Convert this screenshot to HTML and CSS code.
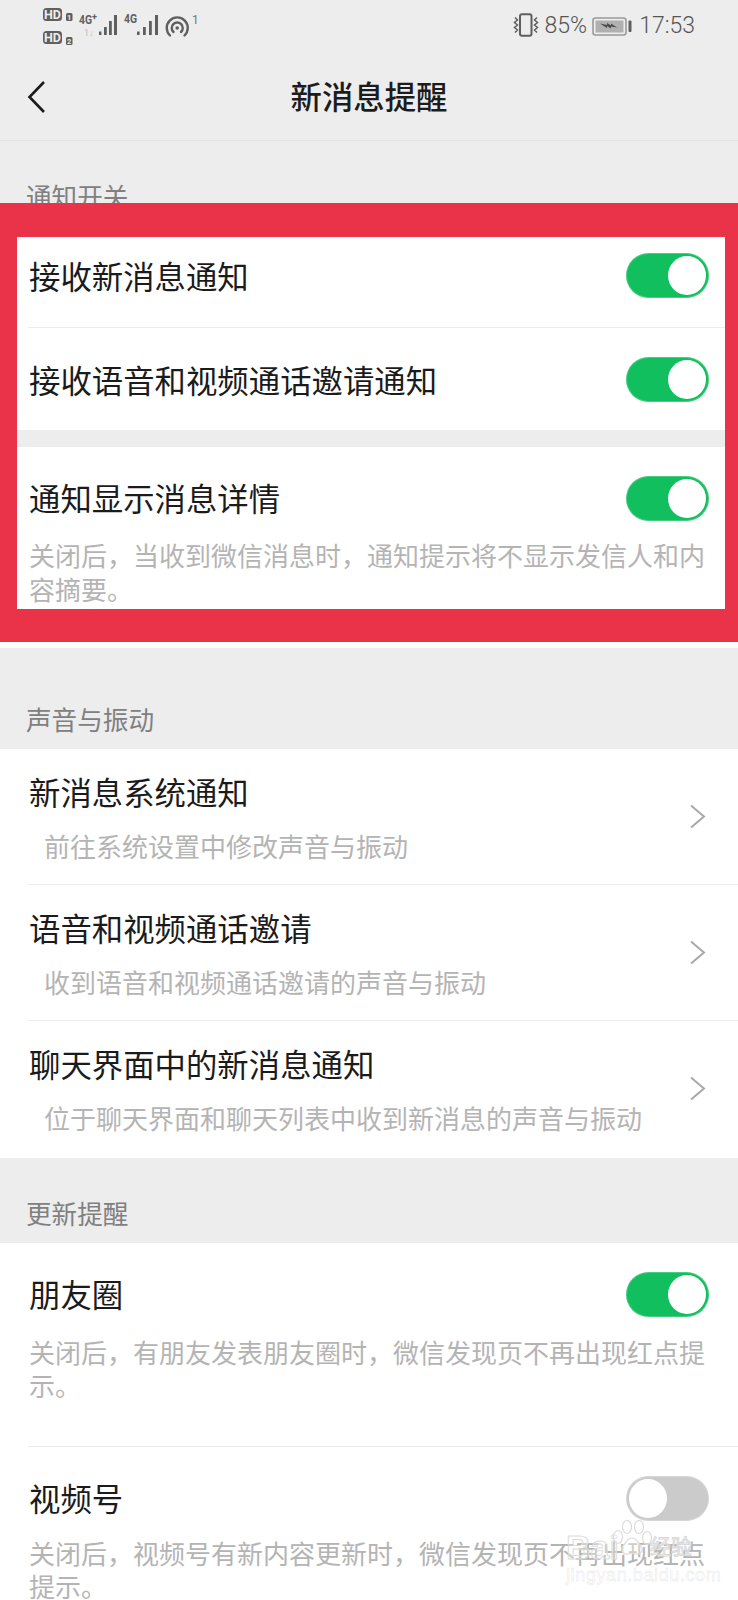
FILE: index.html
```html
<!DOCTYPE html>
<html lang="zh-CN">
<head>
<meta charset="utf-8">
<title>新消息提醒</title>
<link rel="stylesheet" href="styles.css">
</head>
<body>
<div class="page">
  <header class="status">
    <svg class="status-left" width="170" height="50" viewBox="35 0 170 50">
      <rect x="43" y="8" width="19" height="13" rx="3.5" fill="#5f5f5f"/>
      <text x="52.5" y="19" class="hd" text-anchor="middle">HD</text>
      <rect x="66" y="13" width="6.5" height="8" rx="1.5" fill="#5f5f5f"/>
      <text x="69.2" y="20" class="tiny-in" text-anchor="middle">1</text>
      <rect x="43" y="31" width="19" height="13" rx="3.5" fill="#5f5f5f"/>
      <text x="52.5" y="42" class="hd" text-anchor="middle">HD</text>
      <rect x="66" y="37" width="6.5" height="8" rx="1.5" fill="#5f5f5f"/>
      <text x="69.2" y="44" class="tiny-in" text-anchor="middle">2</text>
      <text x="79" y="24" class="net" textLength="13" lengthAdjust="spacingAndGlyphs">4G</text>
      <text x="92" y="20" class="plus">+</text>
      <text x="84" y="36" class="updown">1↓</text>
      <g fill="#5f5f5f">
        <rect x="99" y="31.5" width="2.4" height="3.5"/>
        <rect x="104" y="27" width="2.8" height="8"/>
        <rect x="109" y="21" width="2.8" height="14"/>
        <rect x="114" y="15" width="3" height="20"/>
      </g>
      <text x="124" y="23" class="net" textLength="13" lengthAdjust="spacingAndGlyphs">4G</text>
      <g fill="#5f5f5f">
        <rect x="137" y="31.5" width="2.6" height="3.5"/>
        <rect x="143" y="27" width="2.8" height="8"/>
        <rect x="149" y="21" width="2.8" height="14"/>
        <rect x="155" y="15" width="3" height="20"/>
      </g>
      <g fill="none" stroke="#5f5f5f" stroke-width="2.4" stroke-linecap="round">
        <path d="M170 35.5a10.5 10.5 0 1 1 14.5 0"/>
        <path d="M173.5 32a5.5 5.5 0 1 1 7.5 0"/>
      </g>
      <circle cx="177.2" cy="28" r="1.8" fill="#5f5f5f"/>
      <text x="192" y="24" class="sup">1</text>
    </svg>
    <div class="status-right">
      <svg width="28" height="24" viewBox="0 0 28 24" class="vib">
        <rect x="8" y="1.2" width="11.5" height="21.5" rx="2" fill="none" stroke="#5f5f5f" stroke-width="2"/>
        <path d="M3 4.5l2.5 2.5-3 2.5 3 2.5-3 2.5 3 2.5-2.5 2.5M25 4.5l-2.5 2.5 3 2.5-3 2.5 3 2.5-3 2.5 2.5 2.5" fill="none" stroke="#5f5f5f" stroke-width="1.5"/>
      </svg>
      <span class="pct">85%</span>
      <svg width="40" height="19" viewBox="0 0 40 19" class="batt">
        <rect x="1" y="1" width="33" height="17" rx="2.5" fill="none" stroke="#999" stroke-width="1.6"/>
        <rect x="3.5" y="3.5" width="28" height="12" fill="#b0b0b0"/>
        <rect x="36.5" y="3.5" width="3" height="11.5" rx="1" fill="#5f5f5f"/>
        <path d="M8 6.500l7 1.500 0-2 4 2.500 0-2 6 4-6-1 0 2-4-2.500 0 2z" fill="#4a4a4a"/>
      </svg>
      <span class="time">17:53</span>
    </div>
  </header>

  <nav class="nav">
    <svg class="back" width="20" height="34" viewBox="0 0 20 34"><path d="M17 2L2.500 17 17 32" fill="none" stroke="#1c1c1c" stroke-width="2.600"/></svg>
    <h1 class="nav-title">新消息提醒</h1>
  </nav>

  <h2 class="head head-first">通知开关</h2>
  <section class="card">
    <div class="row row-first line">
      <span class="title">接收新消息通知</span>
      <span class="toggle on"><i class="thumb"></i></span>
    </div>
    <div class="row">
      <span class="title">接收语音和视频通话邀请通知</span>
      <span class="toggle on"><i class="thumb"></i></span>
    </div>
  </section>
  <section class="card card-gap">
    <div class="detail detail-a">
      <div class="detail-top">
        <span class="title">通知显示消息详情</span>
        <span class="toggle on"><i class="thumb"></i></span>
      </div>
      <p class="desc">关闭后，当收到微信消息时，通知提示将不显示发信人和内容摘要。</p>
    </div>
  </section>

  <h2 class="head head-second">声音与振动</h2>
  <section class="card">
    <div class="link line">
      <div class="link-text">
        <div class="title">新消息系统通知</div>
        <div class="sub">前往系统设置中修改声音与振动</div>
      </div>
      <svg class="chev" width="17" height="25" viewBox="0 0 17 25"><path d="M2 1.500L15 12.500 2 23.500" fill="none" stroke="#a8a8a8" stroke-width="2"/></svg>
    </div>
    <div class="link line">
      <div class="link-text">
        <div class="title">语音和视频通话邀请</div>
        <div class="sub">收到语音和视频通话邀请的声音与振动</div>
      </div>
      <svg class="chev" width="17" height="25" viewBox="0 0 17 25"><path d="M2 1.500L15 12.500 2 23.500" fill="none" stroke="#a8a8a8" stroke-width="2"/></svg>
    </div>
    <div class="link">
      <div class="link-text">
        <div class="title">聊天界面中的新消息通知</div>
        <div class="sub">位于聊天界面和聊天列表中收到新消息的声音与振动</div>
      </div>
      <svg class="chev" width="17" height="25" viewBox="0 0 17 25"><path d="M2 1.500L15 12.500 2 23.500" fill="none" stroke="#a8a8a8" stroke-width="2"/></svg>
    </div>
  </section>

  <h2 class="head head-third">更新提醒</h2>
  <section class="card">
    <div class="detail detail-b line">
      <div class="detail-top">
        <span class="title">朋友圈</span>
        <span class="toggle on"><i class="thumb"></i></span>
      </div>
      <p class="desc">关闭后，有朋友发表朋友圈时，微信发现页不再出现红点提示。</p>
    </div>
    <div class="detail detail-c">
      <div class="detail-top">
        <span class="title">视频号</span>
        <span class="toggle"><i class="thumb"></i></span>
      </div>
      <p class="desc">关闭后，视频号有新内容更新时，微信发现页不再出现红点提示。</p>
    </div>
  </section>

  <div class="frame"></div>

  <div class="mark">
    <span class="mark-bai">Bai</span>
    <svg class="paw" width="40" height="36" viewBox="0 0 40 36">
      <g fill="rgba(255,255,255,.35)" stroke="#dcdcdc" stroke-width="1.200">
        <ellipse cx="6" cy="17" rx="4.500" ry="6.500"/>
        <ellipse cx="15" cy="7" rx="4.500" ry="6.500"/>
        <ellipse cx="27" cy="7" rx="4.500" ry="6.500"/>
        <ellipse cx="35" cy="18" rx="4.500" ry="6.500"/>
        <path d="M20 18c-5 0-6 5-9 8-3 4 0 9 5 8 3-1 5-1 8 0 5 1 8-4 5-8-3-3-4-8-9-8z"/>
      </g>
    </svg>
    <span class="mark-cn">经验</span>
    <span class="mark-url">jingyan.baidu.com</span>
  </div>
</div>
</body>
</html>
```

FILE: styles.css
```css
* { box-sizing: border-box; }
html, body { margin: 0; padding: 0; }
body {
  background: #ededed;
  font-family: "Noto Sans CJK SC", "Noto Sans", sans-serif;
  color: #1b1b1b;
}
.page {
  position: relative;
  width: 738px;
  height: 1600px;
  overflow: hidden;
  background: #ededed;
}

/* status bar */
.status {
  height: 60px;
  display: flex;
  justify-content: space-between;
  padding-right: 43px;
}
.status-left { display: block; margin-left: 35px; }
.status-left text { font-family: "Roboto", sans-serif; }
.status-left .hd { font-size: 12.5px; font-weight: 700; fill: #ededed; }
.status-left .tiny-in { font-size: 7.5px; font-weight: 700; fill: #ededed; }
.status-left .net { font-size: 12.5px; font-weight: 700; fill: #5f5f5f; }
.status-left .plus { font-size: 9px; font-weight: 700; fill: #5f5f5f; }
.status-left .updown { font-size: 9px; fill: #c2c2c2; }
.status-left .sup { font-size: 12px; fill: #777; }
.status-right {
  display: flex;
  align-items: center;
  height: 50px;
  font-family: "Roboto", sans-serif;
  font-weight: 300;
  font-size: 23px;
  color: #555;
}
.vib { margin-right: -1px; }
.pct { margin-left: 6px; margin-right: 5px; }
.batt { margin-right: 7px; margin-top: 2px; }

/* nav */
.nav {
  height: 81px;
  display: flex;
  align-items: center;
  justify-content: center;
  position: relative;
  border-bottom: 1px solid #e3e3e3;
}
.back { position: absolute; left: 27px; top: 20px; }
.nav-title {
  margin: 0;
  padding-bottom: 9px;
  font-size: 31.4px;
  font-weight: 500;
  line-height: 44px;
  color: #1c1c1c;
}

/* section headers */
.head {
  margin: 0;
  padding: 0 0 13px 26px;
  font-size: 25.6px;
  font-weight: 400;
  line-height: 34px;
  color: #808080;
  display: flex;
  align-items: flex-end;
}
.head-first { height: 85px; }
.head-second { height: 101px; }
.head-third { height: 85px; }

/* cards and rows */
.card { background: #fff; }
.card-gap { margin-top: 17px; }
.line { position: relative; }
.line::after {
  content: "";
  position: absolute;
  left: 28px;
  right: 0;
  bottom: 0;
  height: 1px;
  background: #ececec;
}
.row {
  height: 102px;
  display: flex;
  align-items: center;
  justify-content: space-between;
  padding: 0 29px;
}
.row-first { padding-bottom: 3px; }
.title {
  font-size: 31.4px;
  line-height: 45px;
  color: #1b1b1b;
}
.detail-top .title { padding-bottom: 2px; }
.toggle {
  flex: none;
  display: flex;
  width: 83px;
  height: 45px;
  padding: 3px;
  border-radius: 23px;
  background: #cbcbcb;
  box-shadow: inset 0 0 0 1px rgba(255,255,255,.22);
}
.toggle.on {
  background: #12bf5e;
  justify-content: flex-end;
}
.thumb {
  display: block;
  width: 38px;
  height: 39px;
  border-radius: 50%;
  background: #fff;
}
.detail {
  padding: 28px 29px 0;
}
.detail-a { height: 201px; }
.detail-b { height: 204px; }
.detail-c { height: 203px; }
.detail-top {
  display: flex;
  align-items: center;
  justify-content: space-between;
}
.desc {
  margin: 16px 0 0;
  font-size: 26px;
  line-height: 33.5px;
  color: #b4b4b4;
}
.detail-b .desc { margin-top: 17px; }
.detail-c .desc { margin-top: 14px; }
.link {
  height: 136.2px;
  display: flex;
  align-items: center;
  justify-content: space-between;
  padding: 0 32px 2px 29px;
}
.link-text { align-self: flex-start; padding-top: 20px; }
.sub {
  margin-top: 15px;
  padding-left: 15px;
  font-size: 26px;
  line-height: 34px;
  color: #b4b4b4;
}

/* red annotation frame drawn over the screenshot */
.frame {
  position: absolute;
  left: 0;
  top: 203px;
  width: 738px;
  height: 439px;
  border-style: solid;
  border-color: #ea3348;
  border-width: 34px 13px 33px 17px;
}

/* watermark */
.mark { position: absolute; left: 0; top: 0; width: 738px; height: 1600px; pointer-events: none; }
.mark-bai {
  position: absolute;
  left: 566px;
  top: 1527px;
  font: 700 34px/40px "Liberation Sans", sans-serif;
  color: rgba(255,255,255,.3);
  -webkit-text-stroke: 1px #dcdcdc;
}
.paw { position: absolute; left: 612px; top: 1520px; }
.mark-cn {
  position: absolute;
  left: 650px;
  top: 1530px;
  font-size: 21px;
  line-height: 30px;
  color: rgba(255,255,255,.25);
  -webkit-text-stroke: 1px #d8d8d8;
}
.mark-url {
  position: absolute;
  left: 566px;
  top: 1564px;
  font: 400 18px/22px "Liberation Sans", sans-serif;
  letter-spacing: .6px;
  color: #fff;
  -webkit-text-stroke: .4px #e4e4e4;
}
```
